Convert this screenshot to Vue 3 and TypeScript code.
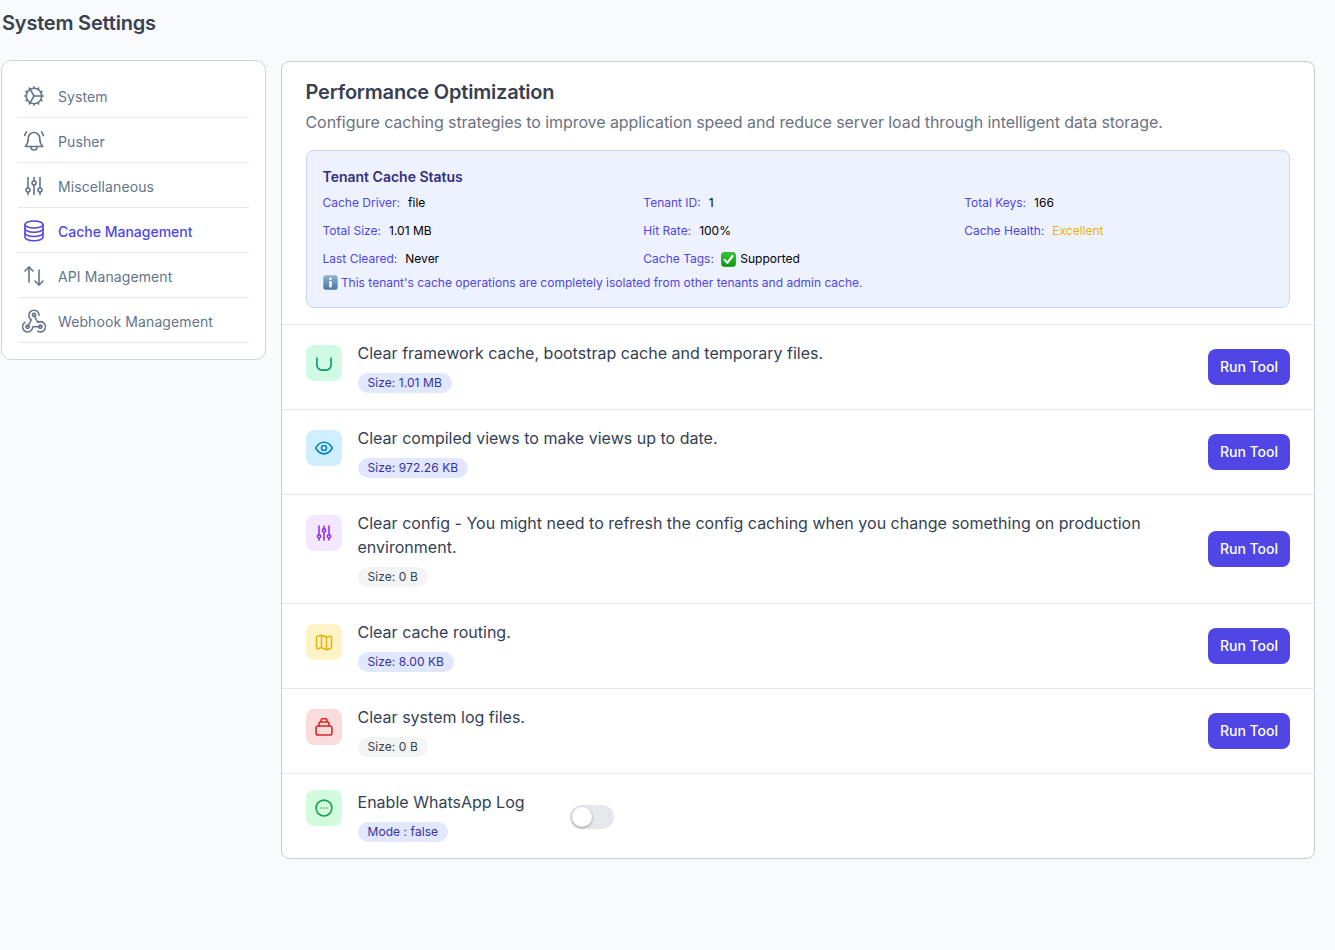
<script setup lang="ts">
interface NavItem { label: string; icon: string; active?: boolean }
interface StatusItem { label: string; value: string; check?: boolean; tone?: string }
interface Tool { title: string; badge: string; muted?: boolean; tone: string; icon: string; toggle?: boolean }

const navItems: NavItem[] = [
  { label: 'System', icon: 'gear' },
  { label: 'Pusher', icon: 'bell' },
  { label: 'Miscellaneous', icon: 'sliders' },
  { label: 'Cache Management', icon: 'database', active: true },
  { label: 'API Management', icon: 'arrows' },
  { label: 'Webhook Management', icon: 'webhook' },
]

const statusItems: StatusItem[] = [
  { label: 'Cache Driver:', value: 'file' },
  { label: 'Tenant ID:', value: '1' },
  { label: 'Total Keys:', value: '166' },
  { label: 'Total Size:', value: '1.01 MB' },
  { label: 'Hit Rate:', value: '100%' },
  { label: 'Cache Health:', value: 'Excellent', tone: 'good' },
  { label: 'Last Cleared:', value: 'Never' },
  { label: 'Cache Tags:', value: 'Supported', check: true },
]

const tools: Tool[] = [
  { title: 'Clear framework cache, bootstrap cache and temporary files.', badge: 'Size: 1.01 MB', tone: 'green', icon: 'cup' },
  { title: 'Clear compiled views to make views up to date.', badge: 'Size: 972.26 KB', tone: 'blue', icon: 'eye' },
  { title: 'Clear config - You might need to refresh the config caching when you change something on production environment.', badge: 'Size: 0 B', muted: true, tone: 'purple', icon: 'sliders' },
  { title: 'Clear cache routing.', badge: 'Size: 8.00 KB', tone: 'yellow', icon: 'map' },
  { title: 'Clear system log files.', badge: 'Size: 0 B', muted: true, tone: 'red', icon: 'stack' },
  { title: 'Enable WhatsApp Log', badge: 'Mode : false', tone: 'mint', icon: 'chat', toggle: true },
]

const iconPaths: Record<string, string[]> = {
  gear: [
    'M12 4.300a7.700 7.700 0 1 0 0 15.400a7.700 7.700 0 1 0 0 -15.400',
    'M12 12h7.500', 'M12 12l-3.800 -6.600', 'M12 12l-3.800 6.600',
    'M12 2.800v1.500', 'M16.700 4l-.8 1.300', 'M20 7.300l-1.300 .8', 'M21.200 12h-1.500', 'M20 16.700l-1.300 -.8', 'M16.700 20l-.8 -1.300', 'M12 21.200v-1.500', 'M7.300 20l.8 -1.300', 'M4 16.700l1.300 -.8', 'M2.800 12h1.500', 'M4 7.300l1.300 .8', 'M7.300 4l.8 1.300',
  ],
  bell: [
    'M12 3.500a5.700 5.700 0 0 1 5.700 5.700c0 4.300 1.200 6.300 3 8.300H3.300c1.800 -2 3 -4 3 -8.300A5.700 5.700 0 0 1 12 3.500',
    'M9 17.500v.5a3 3 0 0 0 6 0v-.5',
    'M21.300 6.500a9 9 0 0 0 -1.800 -3.700', 'M2.700 6.500a9 9 0 0 1 1.800 -3.700',
  ],
  sliders: [
    'M4 16a2 2 0 1 0 4 0a2 2 0 0 0 -4 0', 'M6 3.500v10.500', 'M6 18v2.500',
    'M10 9a2 2 0 1 0 4 0a2 2 0 0 0 -4 0', 'M12 3.500v3.500', 'M12 11v9.500',
    'M16 16a2 2 0 1 0 4 0a2 2 0 0 0 -4 0', 'M18 3.500v10.500', 'M18 18v2.500',
  ],
  database: [
    'M3 5.500a9 3.500 0 1 0 18 0a9 3.500 0 1 0 -18 0',
    'M3 5.500v12.700a9 3.500 0 0 0 18 0v-12.700',
    'M3 9.700a9 3.500 0 0 0 18 0',
    'M3 14a9 3.500 0 0 0 18 0',
  ],
  arrows: ['M3 7l4 -4l4 4', 'M7 3v15', 'M13 17l4 4l4 -4', 'M17 6v15'],
  webhook: [
    'M4.876 13.610a4 4 0 1 0 6.124 3.390h6',
    'M15.066 20.502a4 4 0 1 0 1.934 -7.502c-.706 0 -1.424 .179 -2 .5l-3 -5.500',
    'M16 8a4 4 0 1 0 -8 0c0 1.506 .77 2.818 2 3.500l-3 5.500',
    'M12 6.400a1.300 1.300 0 1 0 0 2.600a1.300 1.300 0 1 0 0 -2.600',
    'M7 15.700a1.300 1.300 0 1 0 0 2.600a1.300 1.300 0 1 0 0 -2.600',
    'M17 15.700a1.300 1.300 0 1 0 0 2.600a1.300 1.300 0 1 0 0 -2.600',
  ],
  cup: ['M3.500 6v8.500a6 6 0 0 0 6 6h5a6 6 0 0 0 6 -6v-8.500'],
  eye: [
    'M12 9a3 3 0 1 0 0 6a3 3 0 0 0 0 -6',
    'M22 12c-2.700 4.700 -6 7 -10 7s-7.300 -2.300 -10 -7c2.700 -4.700 6 -7 10 -7s7.300 2.300 10 7',
  ],
  map: [
    'M3 7c0 -1 .6 -1.700 1.500 -2l3 -1c.5 -.2 1 -.2 1.500 0l6 2c.5 .2 1 .2 1.500 0l2.500 -1c1 -.3 2 .4 2 1.500v11.500c0 1 -.6 1.700 -1.500 2l-3 1c-.5 .2 -1 .2 -1.500 0l-6 -2c-.5 -.2 -1 -.2 -1.500 0l-2.500 1c-1 .3 -2 -.4 -2 -1.500z',
    'M9 4.500v14', 'M15 6v14',
  ],
  stack: [
    'M4.500 10.800h15a2 2 0 0 1 2 2v6.300a2.500 2.500 0 0 1 -2.500 2.500h-14a2.500 2.500 0 0 1 -2.500 -2.500v-6.300a2 2 0 0 1 2 -2',
    'M6 10.800v-3.300a1.500 1.500 0 0 1 1.500 -1.500h9a1.500 1.500 0 0 1 1.500 1.500v3.300',
    'M8.500 6v-2.500a1.500 1.500 0 0 1 1.500 -1.500h4a1.500 1.500 0 0 1 1.500 1.500v2.500',
  ],
  chat: [
    'M12 2.500a9.500 9.500 0 1 1 0 19a9.500 9.500 0 1 1 0 -19',
    'M8.500 12h.01', 'M12 12h.01', 'M15.500 12h.01',
  ],
}

const iconBox: Record<string, string> = {
  webhook: '2.600 3.100 18.800 18.800',
}

function viewBoxFor(name: string): string {
  return iconBox[name] ?? '0 0 24 24'
}
</script>

<template>
  <div class="page">
    <h1 class="page-title">System Settings</h1>
    <div class="layout">
      <nav class="side-card">
        <a v-for="item in navItems" :key="item.label" class="nav-row" :class="{ active: item.active }">
          <svg class="nav-icon" :class="{ fine: item.icon === 'webhook' }" :viewBox="viewBoxFor(item.icon)" fill="none" stroke="currentColor" stroke-linecap="round" stroke-linejoin="round">
            <path v-for="d in iconPaths[item.icon]" :key="d" :d="d" />
          </svg>
          <span>{{ item.label }}</span>
        </a>
      </nav>

      <main class="main-card">
        <header class="main-head">
          <h2>Performance Optimization</h2>
          <p>Configure caching strategies to improve application speed and reduce server load through intelligent data storage.</p>
        </header>

        <section class="status">
          <h3>Tenant Cache Status</h3>
          <div class="status-grid">
            <div v-for="s in statusItems" :key="s.label" class="status-item">
              <span class="status-label">{{ s.label }}</span>
              <span class="status-value" :class="s.tone">
                <svg v-if="s.check" class="emoji check-emoji" viewBox="0 0 16 16" role="img" aria-label="check">
                  <defs>
                    <linearGradient id="check-bg" x1="0" y1="0" x2="0" y2="1">
                      <stop offset="0" stop-color="#35c92f" />
                      <stop offset="1" stop-color="#0a9a0a" />
                    </linearGradient>
                  </defs>
                  <rect x="0.500" y="0.500" width="15" height="15" rx="3" fill="url(#check-bg)" stroke="#0c7f0c" stroke-width="0.6" />
                  <path d="M3.800 8.300l3 3.200l5.400 -7" fill="none" stroke="#fff" stroke-width="2.300" stroke-linecap="round" stroke-linejoin="round" />
                </svg>
                <span>{{ s.value }}</span>
              </span>
            </div>
          </div>
          <p class="status-note">
            <svg class="emoji note-emoji" viewBox="0 0 16 16" role="img" aria-label="information">
              <defs>
                <linearGradient id="info-bg" x1="0" y1="0" x2="0" y2="1">
                  <stop offset="0" stop-color="#8fb3d4" />
                  <stop offset="1" stop-color="#49779f" />
                </linearGradient>
              </defs>
              <rect x="0.300" y="0.300" width="15.400" height="15.400" rx="3" fill="url(#info-bg)" />
              <circle cx="8" cy="4" r="1.400" fill="#fff" />
              <rect x="6.700" y="6.500" width="2.600" height="6.800" rx="0.500" fill="#fff" />
            </svg>
            This tenant's cache operations are completely isolated from other tenants and admin cache.
          </p>
        </section>

        <div v-for="t in tools" :key="t.title" class="tool-row">
          <span class="tool-icon" :class="[t.tone, { flush: t.toggle }]">
            <svg viewBox="0 0 24 24" fill="none" stroke="currentColor" stroke-linecap="round" stroke-linejoin="round">
              <path v-for="d in iconPaths[t.icon]" :key="d" :d="d" />
            </svg>
          </span>
          <div class="tool-body" :class="{ compact: t.toggle }">
            <p class="tool-title">{{ t.title }}</p>
            <span class="badge" :class="{ muted: t.muted }">{{ t.badge }}</span>
          </div>
          <span v-if="t.toggle" class="switch"><span class="knob"></span></span>
          <button v-else class="run-btn" type="button">Run Tool</button>
        </div>
      </main>
    </div>
  </div>
</template>

<style>
html, body { background: #f9fafb; }
</style>

<style scoped>
.page {
  min-height: 950px;
  box-sizing: border-box;
  background: #f9fafb;
  padding: 11px 20px 0 1px;
  font-family: Inter, "Liberation Sans", sans-serif;
  color: #374151;
}
.page-title {
  margin: 0 0 25px 1px;
  font-size: 20px;
  line-height: 24px;
  font-weight: 600;
  letter-spacing: -0.2px;
  color: #374151;
}
.layout {
  display: flex;
  align-items: flex-start;
  gap: 15px;
}
.side-card {
  width: 265px;
  box-sizing: border-box;
  flex: none;
  display: flex;
  flex-direction: column;
  padding: 12px 16px 16px;
  background: #fff;
  border: 1px solid #cbd5e1;
  border-radius: 10px;
}
.nav-row {
  height: 45px;
  box-sizing: border-box;
  display: flex;
  align-items: center;
  gap: 12px;
  padding: 2px 0 0 4px;
  font-size: 14px;
  font-weight: 400;
  letter-spacing: 0.1px;
  color: #64748b;
  border-bottom: 1px solid #e2e8f0;
}
.nav-row.active {
  color: #4f46e5;
  font-weight: 500;
  letter-spacing: 0;
}
.nav-icon {
  width: 24px;
  height: 24px;
  flex: none;
  stroke-width: 1.6;
}
.nav-icon.fine { stroke-width: 1.2; }
.main-card {
  flex: 1;
  min-width: 0;
  margin-top: 1px;
  background: #fff;
  border: 1px solid #c9ccd1;
  border-radius: 8px;
}
.main-head { padding: 16px 24px 0 23.5px; }
.main-head h2 {
  margin: 0;
  font-size: 20px;
  line-height: 28px;
  font-weight: 600;
  letter-spacing: -0.2px;
  color: #374151;
}
.main-head p {
  margin: 2px 0 0;
  font-size: 16px;
  line-height: 28px;
  letter-spacing: -0.075px;
  color: #6b7280;
}
.status {
  margin: 14px 24px 16px;
  padding: 16px 16px 16px 15.5px;
  background: #eef2ff;
  border: 1px solid #c7d2fe;
  border-radius: 8px;
}
.status h3 {
  margin: 0 0 8px;
  font-size: 14px;
  line-height: 20px;
  font-weight: 600;
  color: #312e81;
}
.status-grid {
  display: grid;
  grid-template-columns: repeat(3, 1fr);
  gap: 12px;
}
.status-item {
  display: flex;
  gap: 8px;
  font-size: 12px;
  line-height: 16px;
}
.status-label { color: #4f46e5; }
.status-value {
  display: inline-flex;
  align-items: center;
  gap: 4px;
  color: #000;
}
.status-value.good { color: #eab308; }
.emoji { width: 15px; height: 15px; flex: none; }
.check-emoji { margin-left: -0.7px; }
.note-emoji { vertical-align: -3px; }
.status-note {
  margin: 8px 0 0;
  font-size: 12px;
  line-height: 16px;
  color: #4f46e5;
}
.tool-row {
  display: flex;
  align-items: center;
  gap: 15.5px;
  padding: 16px 24px;
  border-top: 1px solid #e5e7eb;
}
.tool-icon {
  width: 36px;
  height: 36px;
  flex: none;
  align-self: flex-start;
  margin-top: 4px;
  display: flex;
  align-items: center;
  justify-content: center;
  border-radius: 8px;
}
.tool-icon.flush { margin-top: 0; }
.tool-icon svg { width: 20px; height: 20px; stroke-width: 1.9; }
.tool-icon.green { background: #d1fae5; color: #059669; }
.tool-icon.blue { background: #cfeeff; color: #0284c7; }
.tool-icon.purple { background: #f3e8ff; color: #9333ea; }
.tool-icon.yellow { background: #fef3c7; color: #eab308; }
.tool-icon.red { background: #fadcdc; color: #dc2626; }
.tool-icon.mint { background: #d1fadf; color: #16a34a; }
.tool-body { flex: 1; min-width: 0; padding-right: 40px; }
.tool-body.compact { flex: none; padding-right: 29.8px; }
.tool-title {
  margin: 0 0 8px;
  font-size: 16px;
  line-height: 24px;
  letter-spacing: 0.012px;
  color: #334155;
}
.badge {
  display: inline-block;
  height: 20px;
  padding: 0 10px;
  border-radius: 10px;
  background: #e0e7ff;
  color: #3730a3;
  font-size: 12px;
  line-height: 20px;
  letter-spacing: 0.07px;
  vertical-align: top;
}
.badge.muted { background: #f3f4f6; color: #374151; }
.run-btn {
  flex: none;
  width: 82px;
  height: 36px;
  padding: 0;
  border: 0;
  border-radius: 8px;
  background: #4f46e5;
  color: #fff;
  font: 500 14px/20px Inter, "Liberation Sans", sans-serif;
}
.switch {
  position: relative;
  width: 44px;
  height: 24px;
  flex: none;
  margin-top: 2px;
  border-radius: 12px;
  background: #e5e7eb;
}
.knob {
  position: absolute;
  top: 2px;
  left: 2px;
  width: 20px;
  height: 20px;
  border-radius: 50%;
  background: #fff;
  box-shadow: 0 1px 3px rgba(0, 0, 0, 0.35);
}
</style>
